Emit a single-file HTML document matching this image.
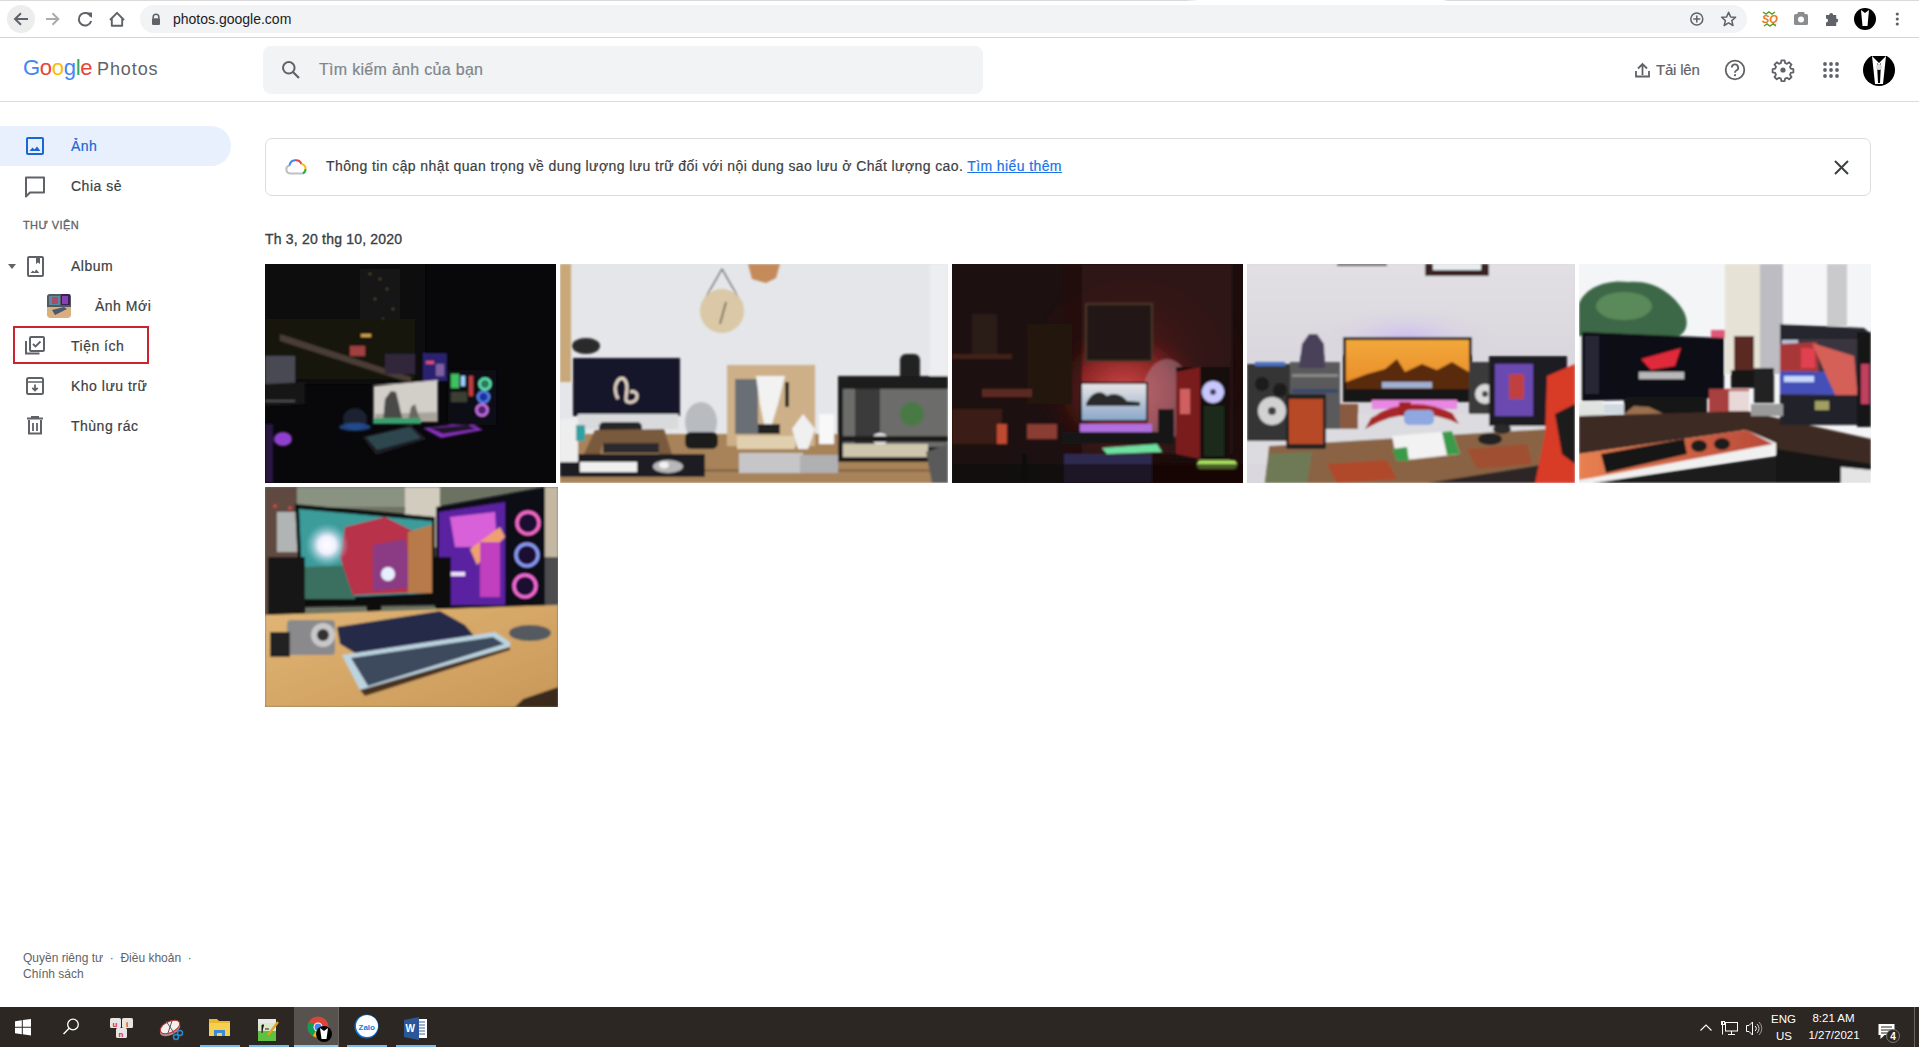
<!DOCTYPE html>
<html><head><meta charset="utf-8">
<style>
*{margin:0;padding:0;box-sizing:border-box}
html,body{width:1919px;height:1047px;overflow:hidden;background:#fff;font-family:"Liberation Sans",sans-serif;color:#3c4043}
.a{position:absolute}
.t{position:absolute;white-space:nowrap;line-height:1}
.m{-webkit-text-stroke:0.2px currentColor}
svg{display:block}
</style></head><body>
<!-- chrome toolbar -->
<div class="a" style="left:0;top:0;width:1198px;height:1px;background:linear-gradient(90deg,#dadada 99%,#fff)"></div>
<div class="a" style="left:1443px;top:0;width:476px;height:1px;background:linear-gradient(90deg,#fff,#dadada 1%)"></div>
<div class="a" style="left:0;top:37px;width:1919px;height:1px;background:#d3d4d6"></div>
<div class="a" style="left:7px;top:5px;width:28px;height:28px;border-radius:14px;background:#ededee"></div>
<svg class="a" style="left:0;top:0" width="140" height="37" viewBox="0 0 140 37">
 <path d="M28 19H15.5M21 13.2L15 19l6 5.8" fill="none" stroke="#5f6368" stroke-width="2"/>
 <path d="M46 19h12.5M52.5 13.2L58.3 19l-5.8 5.8" fill="none" stroke="#a9abae" stroke-width="2"/>
 <path d="M90.8 16.5A6.3 6.3 0 1 0 91.2 21" fill="none" stroke="#5f6368" stroke-width="2"/>
 <path d="M86.5 12.5h5.5v5.5z" fill="#5f6368"/>
 <path d="M110 20l7-7.2 7 7.2M111.8 18.5v7.2h10.4v-7.2" fill="none" stroke="#5f6368" stroke-width="1.9" stroke-linejoin="round"/>
</svg>
<div class="a" style="left:140px;top:5px;width:1607px;height:28px;border-radius:14px;background:#f1f3f4"></div>
<svg class="a" style="left:150px;top:12px" width="12" height="14" viewBox="0 0 12 14">
 <path d="M3.2 6.5V5a2.8 2.8 0 0 1 5.6 0v1.5" fill="none" stroke="#5f6368" stroke-width="1.6"/>
 <rect x="2" y="6.3" width="8" height="6.6" rx="0.8" fill="#5f6368"/>
</svg>
<div class="t" style="left:173px;top:12px;font-size:14px;color:#202124">photos.google.com</div>
<svg class="a" style="left:1680px;top:0" width="239" height="37" viewBox="0 0 239 37">
 <circle cx="16.8" cy="19" r="6" fill="none" stroke="#5f6368" stroke-width="1.5"/>
 <path d="M16.8 15.5v7M13.3 19h7" stroke="#5f6368" stroke-width="1.5"/>
 <path d="M48.6 12.3l2 4.6 5 .4-3.8 3.3 1.2 4.9-4.4-2.6-4.4 2.6 1.2-4.9-3.8-3.3 5-.4z" fill="none" stroke="#5f6368" stroke-width="1.5" stroke-linejoin="round"/>
 <text x="82" y="23" font-family="Liberation Sans" font-weight="bold" font-style="italic" font-size="11" fill="#e8791c">SQ</text>
 <path d="M83 12l3 2 3-2 3 2 3-2M84 26l3-2 3 2 3-2 3 2" stroke="#5aa02c" stroke-width="1.5" fill="none"/>
 <rect x="114" y="14" width="14" height="11" rx="1.5" fill="#8a8c8e"/>
 <rect x="117.5" y="12" width="7" height="3" rx="1" fill="#8a8c8e"/>
 <circle cx="121" cy="19.5" r="3" fill="#fff"/>
 <path d="M146 15h3.2a2 2 0 1 1 4 0h3v3.5a2 2 0 1 1 0 4V26h-10.2v-3.5a2 2 0 1 0 0-4z" fill="#5f6368"/>
 <circle cx="185" cy="19" r="11" fill="#000"/>
 <path d="M181 10l4 3 4-3 -1.5 16h-5z" fill="#fff"/>
 <circle cx="217.3" cy="14" r="1.6" fill="#5f6368"/>
 <circle cx="217.3" cy="19" r="1.6" fill="#5f6368"/>
 <circle cx="217.3" cy="24" r="1.6" fill="#5f6368"/>
</svg>

<!-- photos header -->
<div class="a" style="left:0;top:101px;width:1919px;height:1px;background:#dadce0"></div>
<div class="t" style="left:23px;top:57px;font-size:22px;letter-spacing:-0.3px"><span style="color:#4285f4">G</span><span style="color:#ea4335">o</span><span style="color:#fbbc05">o</span><span style="color:#4285f4">g</span><span style="color:#34a853">l</span><span style="color:#ea4335">e</span></div>
<div class="t" style="left:97px;top:60px;font-size:18px;letter-spacing:0.9px;color:#5f6368">Photos</div>
<div class="a" style="left:263px;top:46px;width:720px;height:48px;border-radius:8px;background:#f1f3f4"></div>
<svg class="a" style="left:279px;top:58px" width="24" height="24" viewBox="0 0 24 24">
 <circle cx="9.8" cy="9.8" r="5.8" fill="none" stroke="#5f6368" stroke-width="2"/>
 <path d="M14 14l6 6" stroke="#5f6368" stroke-width="2.2"/>
</svg>
<div class="t" style="left:319px;top:62px;font-size:16px;letter-spacing:0.3px;color:#80868b;-webkit-text-stroke:0.2px #80868b">Tìm kiếm ảnh của bạn</div>

<svg class="a" style="left:1630px;top:56px" width="289" height="30" viewBox="0 0 289 30">
 <path d="M6 15v5.5h13V15M12.5 19V8.5M8 12.5l4.5-4.5 4.5 4.5" fill="none" stroke="#5f6368" stroke-width="1.8"/>
 <circle cx="105" cy="14" r="9.3" fill="none" stroke="#5f6368" stroke-width="1.8"/>
 <path d="M101.8 11.6a3.2 3.2 0 1 1 4.5 2.9c-1 .5-1.3 1.1-1.3 2.2" fill="none" stroke="#5f6368" stroke-width="1.8"/>
 <circle cx="105" cy="19.2" r="1.1" fill="#5f6368"/>
 <g transform="translate(153 14)">
  <path d="M-1.6-9.6h3.2l.5 2.6 1.9.8 2.2-1.5 2.3 2.3-1.5 2.2.8 1.9 2.6.5v3.2l-2.6.5-.8 1.9 1.5 2.2-2.3 2.3-2.2-1.5-1.9.8-.5 2.6h-3.2l-.5-2.6-1.9-.8-2.2 1.5-2.3-2.3 1.5-2.2-.8-1.9-2.6-.5v-3.2l2.6-.5.8-1.9-1.5-2.2 2.3-2.3 2.2 1.5 1.9-.8z" fill="none" stroke="#5f6368" stroke-width="1.8" stroke-linejoin="round"/>
  <circle cx="0" cy="0" r="2.6" fill="#5f6368"/>
 </g>
 <g fill="#5f6368">
  <circle cx="195" cy="8" r="1.9"/><circle cx="201" cy="8" r="1.9"/><circle cx="207" cy="8" r="1.9"/>
  <circle cx="195" cy="14" r="1.9"/><circle cx="201" cy="14" r="1.9"/><circle cx="207" cy="14" r="1.9"/>
  <circle cx="195" cy="20" r="1.9"/><circle cx="201" cy="20" r="1.9"/><circle cx="207" cy="20" r="1.9"/>
 </g>
 <circle cx="249" cy="14" r="16" fill="#000"/>
 <path d="M242 0l7 7 7-7 -3 28h-8z" fill="#fff"/>
 <path d="M247 7l2 2 2-2 -1 20h-2z" fill="#000"/>
 <circle cx="249" cy="11" r="3" fill="#ddd"/>
</svg>
<div class="t m" style="left:1656px;top:62px;font-size:15px;color:#5f6368;letter-spacing:-0.2px">Tải lên</div>

<!-- sidebar -->
<div class="a" style="left:0;top:126px;width:231px;height:40px;border-radius:0 20px 20px 0;background:#e8f0fe"></div>
<svg class="a" style="left:0;top:126px" width="60" height="320" viewBox="0 0 60 320">
 <rect x="27" y="12" width="16" height="16" rx="1" fill="none" stroke="#1967d2" stroke-width="2"/>
 <path d="M29.5 25l3-3.5 2 2 2.5-3 3.5 4.5z" fill="#1967d2"/>
 <path d="M26 51.5h18v15H30l-4 4z" fill="none" stroke="#5f6368" stroke-width="2" stroke-linejoin="round"/>
 <path d="M8 138h8l-4 5z" fill="#5f6368"/>
 <rect x="28" y="131" width="15" height="19" rx="1" fill="none" stroke="#5f6368" stroke-width="2"/>
 <path d="M36 131h4v7l-2-1.5-2 1.5z" fill="#5f6368"/>
 <path d="M30.5 147l2.3-2.5 1.5 1.5 2-2.5 3 3.5z" fill="#5f6368"/>
 <path d="M26 215v12.5h13.5" fill="none" stroke="#5f6368" stroke-width="2"/>
 <rect x="30" y="211" width="14" height="14" rx="1" fill="none" stroke="#5f6368" stroke-width="2"/>
 <path d="M33 218l2.5 2.5 5-5" fill="none" stroke="#5f6368" stroke-width="1.8"/>
 <rect x="27" y="252" width="16" height="16" rx="1.5" fill="none" stroke="#5f6368" stroke-width="2"/>
 <path d="M27 256h16" stroke="#5f6368" stroke-width="1.5"/>
 <path d="M35 258.5v6M32.3 261.8l2.7 2.7 2.7-2.7" fill="none" stroke="#5f6368" stroke-width="1.8"/>
 <path d="M27 292.5h16M32 292.5v-1.5h6v1.5" fill="none" stroke="#5f6368" stroke-width="2"/>
 <path d="M29 294v13.5h12V294" fill="none" stroke="#5f6368" stroke-width="2"/>
 <path d="M33 297v8M37 297v8" stroke="#5f6368" stroke-width="1.8"/>
</svg>
<svg class="a" style="left:47px;top:294px;border-radius:3px" width="24" height="24" viewBox="0 0 24 24">
 <rect width="24" height="24" rx="3" fill="#d8b080"/>
 <rect x="0" y="0" width="24" height="13" fill="#505a60"/>
 <rect x="2" y="2" width="11" height="9" fill="#5a8aa0"/>
 <rect x="5" y="3" width="6" height="7" fill="#b04868"/>
 <rect x="14" y="0" width="9" height="11" fill="#3a2060"/>
 <rect x="15" y="2" width="6" height="8" fill="#8a40b0"/>
 <path d="M5 16 L17 13 L20 15 L8 21z" fill="#4a5870"/>
</svg>
<div class="t m" style="left:71px;top:139px;font-size:14px;letter-spacing:0.5px;color:#1967d2">Ảnh</div>
<div class="t m" style="left:71px;top:179px;font-size:14px;letter-spacing:0.5px;color:#3c4043">Chia sẻ</div>
<div class="t m" style="left:23px;top:220px;font-size:11px;color:#5f6368;letter-spacing:0.4px;-webkit-text-stroke:0.3px #5f6368">THƯ VIỆN</div>
<div class="t m" style="left:71px;top:259px;font-size:14px;letter-spacing:0.5px;color:#3c4043">Album</div>
<div class="t m" style="left:95px;top:299px;font-size:14px;letter-spacing:0.5px;color:#3c4043">Ảnh Mới</div>
<div class="t m" style="left:71px;top:339px;font-size:14px;letter-spacing:0.5px;color:#3c4043">Tiện ích</div>
<div class="t m" style="left:71px;top:379px;font-size:14px;letter-spacing:0.5px;color:#3c4043">Kho lưu trữ</div>
<div class="t m" style="left:71px;top:419px;font-size:14px;letter-spacing:0.5px;color:#3c4043">Thùng rác</div>
<div class="a" style="left:13px;top:326px;width:136px;height:38px;border:2.5px solid #c9242f"></div>

<div class="t" style="left:23px;top:952px;font-size:12px;color:#5f6368">Quyền riêng tư &nbsp;·&nbsp; Điều khoản &nbsp;·</div>
<div class="t" style="left:23px;top:968px;font-size:12px;color:#5f6368">Chính sách</div>

<!-- banner -->
<div class="a" style="left:265px;top:138px;width:1606px;height:58px;border:1px solid #dadce0;border-radius:7px"></div>
<svg class="a" style="left:284px;top:156px" width="24" height="20" viewBox="0 0 24 20">
 <path d="M6 17.5a4 4 0 0 1-.5-7.9" fill="none" stroke="#bdc1c6" stroke-width="2"/>
 <path d="M5.5 9.6A6.2 6.2 0 0 1 11 4.2" fill="none" stroke="#4285f4" stroke-width="2"/>
 <path d="M11 4.2a6.2 6.2 0 0 1 6.5 3.8" fill="none" stroke="#ea4335" stroke-width="2"/>
 <path d="M17.5 8a4.8 4.8 0 0 1 4 5" fill="none" stroke="#fbbc04" stroke-width="2"/>
 <path d="M21.5 13a4.5 4.5 0 0 1-3 4.5" fill="none" stroke="#34a853" stroke-width="2"/>
 <path d="M18.5 17.5H6" fill="none" stroke="#bdc1c6" stroke-width="2"/>
</svg>
<div class="t m" style="left:326px;top:159px;font-size:14px;letter-spacing:0.4px;color:#3c4043">Thông tin cập nhật quan trọng về dung lượng lưu trữ đối với nội dung sao lưu ở Chất lượng cao. <span style="color:#1a73e8;text-decoration:underline">Tìm hiểu thêm</span></div>
<svg class="a" style="left:1832px;top:158px" width="19" height="19" viewBox="0 0 19 19">
 <path d="M3 3l13 13M16 3L3 16" stroke="#3c4043" stroke-width="2"/>
</svg>
<div class="t" style="left:265px;top:232px;font-size:14px;color:#3c4043;-webkit-text-stroke:0.35px #3c4043;letter-spacing:0.2px">Th 3, 20 thg 10, 2020</div>

<!-- PHOTOS -->
<svg class="a" style="left:265px;top:264px" width="1606" height="443" viewBox="0 0 1606 443">
<defs>
 <filter id="b1" x="-5%" y="-5%" width="110%" height="110%"><feGaussianBlur stdDeviation="1.2"/></filter>
 <filter id="b2" x="-50%" y="-50%" width="200%" height="200%"><feGaussianBlur stdDeviation="6"/></filter>
 <radialGradient id="redglow2" cx="0.5" cy="0.5" r="0.5"><stop offset="0" stop-color="#5a2020"/><stop offset="1" stop-color="#2a1010" stop-opacity="0"/></radialGradient>
 <radialGradient id="redglow" cx="0.5" cy="0.5" r="0.5"><stop offset="0" stop-color="#d04848"/><stop offset="0.55" stop-color="#8a2424"/><stop offset="1" stop-color="#2a0c0c" stop-opacity="0"/></radialGradient>
 <linearGradient id="p3mon" x1="0" y1="0" x2="0" y2="1"><stop offset="0" stop-color="#e8e4e6"/><stop offset="1" stop-color="#8aa8c8"/></linearGradient>
 <linearGradient id="p4scr" x1="0" y1="0" x2="0" y2="1"><stop offset="0" stop-color="#f2a83a"/><stop offset="1" stop-color="#e88a28"/></linearGradient>
 <linearGradient id="p4top" x1="0" y1="0" x2="0" y2="1"><stop offset="0" stop-color="#e2e0e4"/><stop offset="1" stop-color="#dad7de"/></linearGradient>
 <radialGradient id="p4glow" cx="0.5" cy="0.5" r="0.5"><stop offset="0" stop-color="#cfc0f0"/><stop offset="1" stop-color="#dcd8de" stop-opacity="0"/></radialGradient>
 <linearGradient id="p5mat" x1="0" y1="0" x2="1" y2="0"><stop offset="0" stop-color="#e88050"/><stop offset="1" stop-color="#b84838"/></linearGradient>
 <radialGradient id="burst" cx="0.5" cy="0.5" r="0.5"><stop offset="0" stop-color="#ffffff"/><stop offset="0.4" stop-color="#f0f0ff"/><stop offset="1" stop-color="#80c0d0" stop-opacity="0"/></radialGradient>
 <linearGradient id="p6desk" x1="0" y1="0" x2="1" y2="1"><stop offset="0" stop-color="#e2b676"/><stop offset="1" stop-color="#c89858"/></linearGradient>
 <clipPath id="c1"><rect width="291" height="219"/></clipPath>
 <clipPath id="c2"><rect width="388" height="219"/></clipPath>
 <clipPath id="c3"><rect width="291" height="219"/></clipPath>
 <clipPath id="c4"><rect width="328" height="219"/></clipPath>
 <clipPath id="c5"><rect width="292" height="219"/></clipPath>
 <clipPath id="c6"><rect width="293" height="220"/></clipPath>
</defs>

<!-- Photo 1 -->
<g transform="translate(0 0)" clip-path="url(#c1)">
 <rect width="291" height="219" fill="#08080b"/>
 <g filter="url(#b1)">
 <rect x="0" y="0" width="160" height="120" fill="#0d0b0b"/>
 <rect x="95" y="5" width="40" height="70" fill="#141214"/>
 <g fill="#c8b070" opacity="0.8">
  <circle cx="105" cy="10" r="0.8"/><circle cx="115" cy="15" r="0.8"/><circle cx="122" cy="25" r="0.8"/><circle cx="110" cy="35" r="0.8"/><circle cx="128" cy="45" r="0.8"/><circle cx="118" cy="55" r="0.8"/><circle cx="103" cy="60" r="0.8"/><circle cx="125" cy="65" r="0.8"/>
 </g>
 <rect x="0" y="55" width="150" height="60" fill="#161210"/>
 <path d="M15 70 L146 113 L146 119 L15 77z" fill="#4a3c36"/>
 <rect x="0" y="92" width="30" height="30" fill="#4a4a52"/>
 <rect x="85" y="82" width="15" height="10" fill="#a04040"/>
 <rect x="96" y="70" width="10" height="3" fill="#d0a050"/>
 <rect x="120" y="90" width="30" height="20" fill="#30283a"/>
 <rect x="158" y="89" width="24" height="28" fill="#2a2470"/>
 <rect x="161" y="97" width="8" height="3" fill="#e05070"/>
 <rect x="171" y="100" width="8" height="12" fill="#8060a0"/>
 <path d="M108.5 122 L172.7 116 L172.7 158 L108.5 158z" fill="#d2cec8"/>
 <path d="M110 150 L172 148 L172 158 L110 158z" fill="#a8a49a"/>
 <path d="M118 158 L120 135 L126 127 L131 128 L134 140 L138 158z" fill="#4a4846"/>
 <path d="M143 158 L146 143 L150 140 L153 150 L156 158z" fill="#6a6660"/>
 <rect x="108" y="154" width="48" height="6" fill="#3aa070"/>
 <path d="M97 173 L146 161 L162 175 L111 191z" fill="#1c1c22"/>
 <path d="M101 173 L145 163 L156 174 L112 186z" fill="#2e4650"/>
 <path d="M158 164 L205 159 L218 166 L176 174z" fill="#8a30c0"/>
 <path d="M164 164 L203 161 L211 165 L178 170z" fill="#1e1626"/>
 <ellipse cx="90" cy="155" rx="12" ry="11" fill="#1a2030"/>
 <ellipse cx="90" cy="163" rx="16" ry="4" fill="#2a5ab0" opacity="0.7"/>
 <rect x="183" y="106" width="48" height="55" fill="#0e0e16"/>
 <rect x="186" y="110" width="8" height="14" fill="#40c060"/>
 <rect x="196" y="112" width="4" height="10" fill="#a0d0ff"/>
 <rect x="204" y="112" width="4" height="20" fill="#c04040"/>
 <rect x="186" y="128" width="16" height="10" fill="#3a4030"/>
 <circle cx="220" cy="120" r="5.5" fill="#2a7a60" stroke="#70ffc0" stroke-width="2"/>
 <circle cx="218.5" cy="133" r="5.5" fill="#1a30a0" stroke="#6090ff" stroke-width="2"/>
 <circle cx="217" cy="146" r="5.5" fill="#502070" stroke="#e080ff" stroke-width="2"/>
 <path d="M0 120 L40 118 L40 140 L0 142z" fill="#161618"/>
 <rect x="0" y="136" width="30" height="2" fill="#505050"/>
 <ellipse cx="18" cy="175" rx="9" ry="7" fill="#9040d0"/>
 <rect x="0" y="160" width="8" height="59" fill="#2a1640"/>
 </g>
</g>

<!-- Photo 2 -->
<g transform="translate(295 0)" clip-path="url(#c2)">
 <rect width="388" height="219" fill="#e4e6e9"/>
 <g filter="url(#b1)">
 <rect x="370" y="0" width="18" height="219" fill="#eceef0"/>
 <rect x="0" y="170" width="388" height="49" fill="#a8835a"/>
 <rect x="0" y="205" width="388" height="3" fill="#8a6a48"/>
 <rect x="0" y="0" width="11" height="118" fill="#c8a878"/>
 <path d="M188 0h32l-4 14 -10 5 -14 -4z" fill="#c48a5a"/>
 <path d="M142 40 L162 5 L182 40" fill="none" stroke="#333" stroke-width="1"/>
 <circle cx="162" cy="47" r="22" fill="#dac8a6"/>
 <path d="M160 60 L166 38" stroke="#333" stroke-width="1.2"/>
 <ellipse cx="26" cy="82" rx="14" ry="8" fill="#2a2a2a"/>
 <rect x="13" y="94" width="107" height="58" fill="#16142a"/>
 <path d="M58 135 C50 120 62 108 66 118 C70 128 60 140 72 138 C80 136 78 125 70 128" fill="none" stroke="#e8d8c8" stroke-width="3"/>
 <rect x="18" y="150" width="100" height="15" fill="#d8dadc"/>
 <rect x="60" y="158" width="12" height="8" fill="#c8c8c8"/>
 <rect x="39" y="158" width="43" height="16" rx="5" fill="#262628"/>
 <path d="M24 190 L35 166 L104 165 L112 190 L99 190 L95 179 L43 179 L40 190z" fill="#7a5a3c"/>
 <rect x="43" y="179" width="56" height="10" fill="#2a2a2e"/>
 <ellipse cx="141" cy="158" rx="16" ry="20" fill="#b8bcc0"/>
 <rect x="125" y="168" width="33" height="17" rx="6" fill="#1a1a1a"/>
 <rect x="0" y="190" width="145" height="23" fill="#1a1a22"/>
 <rect x="20" y="198" width="57" height="10" fill="#f0f0f0"/>
 <ellipse cx="108" cy="202.5" rx="15" ry="6.5" fill="#b8b8ba"/>
 <ellipse cx="104" cy="201" rx="5" ry="3.5" fill="#f2f2f2"/>
 <rect x="0" y="155" width="18" height="43" fill="#eeeeee"/>
 <rect x="16" y="161" width="9" height="16" fill="#30a0a0"/>
 <rect x="167" y="101" width="88" height="81" fill="#cdb088"/>
 <rect x="175" y="115" width="23" height="55" fill="#6a6e74"/>
 <path d="M196 112 L225 112 L218 140 L212 160 L204 160 L200 140z" fill="#f2f2f2"/>
 <rect x="198" y="160" width="22" height="10" fill="#222"/>
 <rect x="225" y="118" width="4" height="25" fill="#222"/>
 <rect x="177" y="172" width="58" height="13" fill="#e0d0b0"/>
 <path d="M232 165 L243 150 L255 165 L248 185 L238 185z" fill="#f0f0f0"/>
 <rect x="259" y="150" width="15" height="30" fill="#f8f8f8"/>
 <rect x="179" y="189" width="64" height="20" fill="#c6c6c8"/>
 <rect x="240" y="191" width="38" height="18" fill="#b0b0b2"/>
 <rect x="340" y="90" width="20" height="30" rx="6" fill="#222"/>
 <rect x="278" y="112" width="110" height="86" fill="#1c1c1c"/>
 <rect x="283" y="125" width="105" height="58" fill="#6c6c6a"/>
 <rect x="295" y="125" width="25" height="58" fill="#3a3a3a"/>
 <circle cx="352" cy="150" r="12" fill="#4a7a44"/>
 <ellipse cx="320" cy="175" rx="8" ry="6" fill="#e8e8e8"/>
 <rect x="283" y="180" width="85" height="13" fill="#cfc6ae"/>
 <rect x="283" y="172" width="105" height="6" fill="#1a1a1a"/>
 <path d="M366 188 L388 180 L388 219 L372 219z" fill="#5a5a5a"/>
 </g>
</g>

<!-- Photo 3 -->
<g transform="translate(687 0)" clip-path="url(#c3)">
 <rect width="291" height="219" fill="#1c0c0b"/>
 <g filter="url(#b1)">
 <rect x="110" y="0" width="170" height="190" fill="#2e1414"/>
 <ellipse cx="180" cy="100" rx="120" ry="110" fill="url(#redglow2)"/>
 <ellipse cx="172" cy="128" rx="85" ry="70" fill="url(#redglow)"/>
 <ellipse cx="215" cy="135" rx="25" ry="40" fill="#b08898" opacity="0.5"/>
 <rect x="134" y="40" width="66" height="57" fill="#241212" stroke="#4a3428" stroke-width="2"/>
 <rect x="0" y="0" width="130" height="219" fill="#1e0e0c" opacity="0.6"/>
 <rect x="0" y="90" width="60" height="5" fill="#402018"/>
 <rect x="20" y="50" width="25" height="40" fill="#2a1a16"/>
 <rect x="75" y="60" width="45" height="80" fill="#241210"/>
 <rect x="30" y="125" width="50" height="8" fill="#5a2a22"/>
 <rect x="0" y="145" width="50" height="35" fill="#3a1c16"/>
 <rect x="45" y="160" width="10" height="20" fill="#c04830"/>
 <rect x="75" y="160" width="30" height="15" fill="#8a3c30"/>
 <rect x="128" y="118" width="68" height="40" fill="#0e0e10"/>
 <rect x="130" y="120" width="64" height="36" fill="url(#p3mon)"/>
 <path d="M134 140 C140 126 150 126 155 132 C160 128 170 130 175 137 L188 138 L188 142 L134 142z" fill="#2a2a2a"/>
 <rect x="128" y="160" width="72" height="8" fill="#b070e0"/>
 <rect x="206" y="145" width="16" height="35" fill="#141414"/>
 <rect x="110" y="168" width="110" height="12" fill="#161216"/>
 <path d="M150 184 L205 180 L210 188 L155 190z" fill="#70e0a0"/>
 <rect x="112" y="190" width="88" height="29" fill="#2e2a50"/>
 <rect x="70" y="190" width="5" height="29" fill="#100808"/>
 <rect x="224" y="103" width="54" height="92" fill="#120a0a"/>
 <path d="M224 108 L248 103 L248 195 L224 190z" fill="#7a1e1e"/>
 <rect x="228" y="125" width="10" height="25" fill="#d06060"/>
 <circle cx="261" cy="128" r="11" fill="#c8c8ff"/>
 <circle cx="261" cy="128" r="3" fill="#404060"/>
 <rect x="252" y="142" width="20" height="50" fill="#1a2a1a"/>
 <rect x="245" y="196" width="40" height="9" rx="4" fill="#a8e060"/>
 <rect x="0" y="200" width="291" height="19" fill="#0e0808" opacity="0.6"/>
 </g>
</g>

<!-- Photo 4 -->
<g transform="translate(982 0)" clip-path="url(#c4)">
 <rect width="328" height="219" fill="#dad7de"/>
 <g filter="url(#b1)">
 <rect x="0" y="0" width="328" height="90" fill="url(#p4top)"/>
 <ellipse cx="160" cy="72" rx="95" ry="30" fill="url(#p4glow)"/>
 <rect x="178" y="0" width="64" height="12" fill="#3a2424"/>
 <rect x="186" y="0" width="48" height="6" fill="#e8eef0"/>
 <rect x="90" y="0" width="50" height="2" fill="#4a3030"/>
 <rect x="0" y="150" width="328" height="50" fill="#dcdce0"/>
 <rect x="0" y="100" width="44" height="77" fill="#363636"/>
 <circle cx="25" cy="147" r="14" fill="#d2d2d2"/>
 <circle cx="25" cy="147" r="4" fill="#404040"/>
 <circle cx="15" cy="120" r="7" fill="#1e1e1e"/>
 <circle cx="33" cy="126" r="7" fill="#1e1e1e"/>
 <rect x="43" y="98" width="50" height="67" fill="#5a5a5c"/>
 <rect x="45" y="110" width="46" height="3" fill="#888"/>
 <rect x="45" y="125" width="46" height="4" fill="#3a4a6a"/>
 <path d="M52 104 L55 80 L62 70 L70 70 L77 80 L78 104z" fill="#48405a"/>
 <rect x="8" y="98" width="30" height="4" fill="#4a70c0"/>
 <rect x="96" y="73" width="129" height="65" fill="#121212"/>
 <rect x="99" y="76" width="123" height="49" fill="url(#p4scr)"/>
 <path d="M99 118 L120 110 L138 105 L150 95 L158 108 L175 100 L190 106 L205 98 L222 108 L222 125 L99 125z" fill="#5a2a10"/>
 <rect x="135" y="118" width="50" height="6" fill="#a0b0d0"/>
 <rect x="125" y="136" width="85" height="9" fill="#e888e0"/>
 <path d="M118 165 Q165 138 212 160 L206 150 Q165 128 124 154z" fill="#a82828"/>
 <rect x="152" y="138" width="12" height="14" fill="#a02020"/>
 <rect x="222" y="98" width="28" height="52" fill="#3a3a3a"/>
 <circle cx="238" cy="130" r="10" fill="#dadada"/>
 <circle cx="238" cy="130" r="3" fill="#444"/>
 <rect x="242" y="92" width="78" height="70" fill="#1a1a24"/>
 <rect x="248" y="100" width="38" height="52" fill="#6a48b0"/>
 <rect x="262" y="110" width="15" height="25" fill="#c04040"/>
 <rect x="157" y="146" width="30" height="15" rx="5" fill="#90a8e0"/>
 <rect x="93" y="140" width="18" height="25" fill="#8a5a40"/>
 <path d="M18 219 L22 182 L301 165 L300 200 L280 219z" fill="#8a6444"/>
 <path d="M22 190 L65 188 L60 219 L18 219z" fill="#6e7a54"/>
 <path d="M80 200 L140 196 L150 215 L90 219z" fill="#b04a2a"/>
 <path d="M220 185 L280 180 L285 200 L230 205z" fill="#a05030"/>
 <rect x="39" y="130" width="40" height="55" rx="2" fill="#222"/>
 <rect x="42" y="135" width="34" height="45" fill="#b84a28"/>
 <path d="M145 172 L205 167 L213 190 L150 197z" fill="#f2f2f2"/>
 <path d="M145 185 L160 183 L162 197 L150 197z" fill="#3a9a48"/>
 <path d="M195 168 L205 167 L213 190 L200 191z" fill="#3a9a48"/>
 <ellipse cx="243" cy="175" rx="12" ry="6" fill="#222"/>
 <ellipse cx="255" cy="165" rx="9" ry="5" fill="#2a2a2a"/>
 <path d="M180 219 L300 200 L300 219z" fill="#2e2828"/>
 <path d="M300 112 L328 100 L328 219 L288 219 L298 170z" fill="#d83a28"/>
 <path d="M308 150 L328 140 L328 200 L315 190z" fill="#1a1a1a"/>
 </g>
</g>

<!-- Photo 5 -->
<g transform="translate(1314 0)" clip-path="url(#c5)">
 <rect width="292" height="219" fill="#f4f5f7"/>
 <g filter="url(#b1)">
 <path d="M0 40 C5 25 25 15 50 18 C75 16 95 30 105 48 C110 58 108 68 100 72 L0 72z" fill="#3e6846"/>
 <ellipse cx="45" cy="42" rx="28" ry="14" fill="#5a8a5a"/>
 <rect x="146" y="0" width="35" height="110" fill="#e6e2d6"/>
 <rect x="181" y="0" width="23" height="110" fill="#bcbcc2"/>
 <rect x="204" y="0" width="44" height="60" fill="#f6f6f8"/>
 <rect x="248" y="0" width="20" height="62" fill="#cacacc"/>
 <rect x="132" y="66" width="14" height="8" fill="#e05878"/>
 <path d="M3 68 L145 74 L145 134 L3 137z" fill="#0e0e12"/>
 <rect x="6" y="72" width="14" height="58" fill="#262636"/>
 <path d="M62 95 L102 84 L96 102 L72 106z" fill="#e02a3a"/>
 <rect x="60" y="108" width="45" height="7" fill="#b8b8b8"/>
 <rect x="155" y="72" width="20" height="36" fill="#5a2a22"/>
 <rect x="152" y="106" width="42" height="18" fill="#161616"/>
 <rect x="175" y="104" width="20" height="35" fill="#222"/>
 <rect x="130" y="125" width="40" height="25" fill="#a84040"/>
 <rect x="150" y="127" width="20" height="20" fill="#e8d8d8"/>
 <rect x="0" y="138" width="25" height="18" rx="4" fill="#e0e4e0"/>
 <rect x="25" y="140" width="20" height="10" fill="#d0d8e0"/>
 <rect x="45" y="133" width="83" height="18" rx="3" fill="#121214"/>
 <path d="M45 150 L55 142 L70 143 L85 150 L75 158 L50 158z" fill="#9a7050"/>
 <path d="M0 152 L167 147 L167 166 L0 190z" fill="#3e2a22"/>
 <path d="M10 194 L167 166 L197 179 L197 190 L12 219 L0 219 L0 190z" fill="#f0f0f0"/>
 <path d="M0 190 L167 166 L194 180 L12 214 L0 216z" fill="url(#p5mat)"/>
 <path d="M22 190 L105 175 L108 190 L27 209z" fill="#151515"/>
 <ellipse cx="120" cy="182" rx="8" ry="6" fill="#1e1e1e"/>
 <ellipse cx="143" cy="180" rx="8" ry="6" fill="#1e1e1e"/>
 <path d="M14 219 L197 192 L197 219z" fill="#1e1a1a"/>
 <path d="M167 147 L292 175 L292 219 L197 219 L197 179 L167 166z" fill="#3c2a24"/>
 <path d="M197 185 L292 200 L292 219 L197 219z" fill="#161414"/>
 <path d="M262 203 L292 206 L292 219 L262 219z" fill="#e4e4e4"/>
 <path d="M201 60 L285 64 L292 70 L292 80 L201 78z" fill="#26262e"/>
 <rect x="201" y="75" width="91" height="85" fill="#3a3440"/>
 <rect x="203" y="76" width="16" height="18" fill="#b8c4d8"/>
 <path d="M201 80 L238 78 L240 113 L201 113z" fill="#a83838"/>
 <rect x="222" y="84" width="14" height="20" fill="#e04050"/>
 <path d="M201 107 L263 108 L263 131 L201 130z" fill="#4450b8"/>
 <rect x="205" y="112" width="30" height="6" fill="#c8d8ff"/>
 <path d="M233 79 L275 92 L281 156 L268 156 L248 113z" fill="#d46058"/>
 <rect x="278" y="68" width="14" height="95" fill="#141218"/>
 <rect x="282" y="100" width="8" height="40" fill="#c04060"/>
 <rect x="201" y="131" width="77" height="30" fill="#24222a"/>
 <rect x="236" y="137" width="14" height="9" fill="#a0a060"/>
 <rect x="172" y="140" width="32" height="12" fill="#9a9a9a"/>
 </g>
</g>

<!-- Photo 6 -->
<g transform="translate(0 223)" clip-path="url(#c6)">
 <rect width="293" height="220" fill="#6c7262"/>
 <g filter="url(#b1)">
 <rect x="0" y="0" width="32" height="130" fill="#5e4840"/>
 <rect x="12" y="25" width="22" height="40" fill="#b0b4b4"/>
 <circle cx="10" cy="19" r="1.5" fill="#ff4040"/><circle cx="25" cy="21" r="1.5" fill="#ff4040"/>
 <rect x="32" y="0" width="108" height="20" fill="#8a9282"/>
 <rect x="140" y="0" width="35" height="60" fill="#d2ccbe"/>
 <rect x="280" y="0" width="13" height="70" fill="#c4b8a2"/>
 <rect x="275" y="70" width="18" height="55" fill="#4e4e50"/>
 <path d="M30 17 L170 30 L170 118 L35 120z" fill="#101010"/>
 <path d="M34 22 L167 34 L167 106 L38 112z" fill="#3a9c9a"/>
 <path d="M38 80 L90 78 L90 112 L38 112z" fill="#3a7060"/>
 <path d="M80 40 L120 30 L150 45 L160 105 L88 108 L75 70z" fill="#b83048"/>
 <path d="M108 58 L140 52 L150 100 L108 104z" fill="#8a3a84"/>
 <path d="M143 45 L167 38 L167 106 L143 106z" fill="#b87a48"/>
 <circle cx="62" cy="58" r="22" fill="url(#burst)"/>
 <circle cx="123" cy="87" r="7" fill="#e8f0ff"/>
 <rect x="102" y="112" width="14" height="18" fill="#111"/>
 <path d="M171 20 L280 0 L280 128 L171 124z" fill="#0c0a12"/>
 <path d="M174 25 L240 15 L240 118 L174 118z" fill="#5a24a0"/>
 <path d="M185 30 L230 25 L232 60 L190 60z" fill="#d860d8"/>
 <path d="M205 62 L235 40 L240 50 L212 78z" fill="#f0a070"/>
 <rect x="215" y="55" width="20" height="55" fill="#c040c0"/>
 <rect x="180" y="85" width="20" height="4" fill="#f0e0ff"/>
 <circle cx="263" cy="36" r="11" fill="#1a1030" stroke="#ff70d0" stroke-width="3"/>
 <circle cx="262" cy="68" r="11" fill="#1a1030" stroke="#90a0ff" stroke-width="3"/>
 <circle cx="260" cy="99" r="11" fill="#1a1030" stroke="#ff70e0" stroke-width="3"/>
 <rect x="3" y="70" width="37" height="80" fill="#121212"/>
 <rect x="170" y="70" width="16" height="50" fill="#111"/>
 <path d="M0 128 L293 118 L293 220 L0 220z" fill="url(#p6desk)"/>
 <path d="M72 140 L175 124 L200 138 L210 150 L100 172 L75 157z" fill="#262c48"/>
 <path d="M77 168 L230 145 L245 155 L245 160 L100 207 L95 203z" fill="#bcd4e0"/>
 <path d="M86 171 L228 150 L239 157 L103 199z" fill="#3e4a5c"/>
 <path d="M95 203 L245 160 L245 163 L100 209z" fill="#4a3020"/>
 <rect x="22" y="133" width="48" height="35" rx="4" fill="#8a8a8c"/>
 <rect x="5" y="145" width="20" height="25" fill="#222"/>
 <circle cx="58" cy="148" r="12" fill="#c8c8c8"/>
 <circle cx="58" cy="148" r="6" fill="#333"/>
 <ellipse cx="265" cy="146" rx="21" ry="8" fill="#555a60"/>
 <path d="M258 212 L293 200 L293 220 L250 220z" fill="#3a2a1a"/>
 </g>
</g>
</svg>


<!-- taskbar -->
<svg class="a" style="left:0;top:1007px" width="1919" height="40" viewBox="0 0 1919 40">
 <rect width="1919" height="40" fill="#2c2723"/>
 <!-- windows logo -->
 <g fill="#fff">
  <path d="M15 14.2l6.8-1v6.5H15z"/><path d="M22.8 13.1l8.2-1.2v7.8h-8.2z"/>
  <path d="M15 20.7h6.8v6.5L15 26.2z"/><path d="M22.8 20.7H31v7.8l-8.2-1.2z"/>
 </g>
 <!-- search -->
 <circle cx="73" cy="17.5" r="5.3" fill="none" stroke="#fff" stroke-width="1.3"/>
 <path d="M69.2 21.3L63.5 27" stroke="#fff" stroke-width="1.4"/>
 <!-- unikey -->
 <rect x="110" y="11" width="11" height="10" rx="1.5" fill="#e8e4e4"/>
 <rect x="122" y="11" width="11" height="10" rx="1.5" fill="#e8e4e4"/>
 <rect x="116" y="21" width="11" height="10" rx="1.5" fill="#e8e4e4"/>
 <text x="112.5" y="19.5" font-family="Liberation Sans" font-size="8" font-weight="bold" fill="#d03030">u</text>
 <text x="126" y="19.5" font-family="Liberation Sans" font-size="8" font-weight="bold" fill="#d03030">i</text>
 <text x="118.5" y="29.5" font-family="Liberation Sans" font-size="8" font-weight="bold" fill="#d03030">n</text>
 <!-- snipping -->
 <ellipse cx="170" cy="22" rx="11" ry="6" transform="rotate(-25 170 22)" fill="#b88a90"/>
 <ellipse cx="170" cy="20" rx="10.5" ry="5.5" transform="rotate(-25 170 20)" fill="#f4f0f0" stroke="#c03030" stroke-width="1"/>
 <path d="M166 14l8 12M172 14l-4 12" stroke="#555" stroke-width="1"/>
 <circle cx="176" cy="30" r="2.5" fill="none" stroke="#2a8ad0" stroke-width="1.5"/>
 <circle cx="180" cy="26" r="2.5" fill="none" stroke="#2a8ad0" stroke-width="1.5"/>
 <!-- explorer -->
 <path d="M209 12h8l2 2h11v15h-21z" fill="#e8b830"/>
 <rect x="209" y="16" width="21" height="13" fill="#f8d050"/>
 <path d="M214 29v-6h11v6h-3v-3h-5v3z" fill="#3a8ad8"/>
 <rect x="200" y="38" width="40" height="2" fill="#76b9ed"/>
 <!-- notepad++ -->
 <rect x="258" y="12" width="18" height="22" fill="#d8e8c8"/>
 <rect x="258" y="24" width="18" height="10" fill="#60c040"/>
 <rect x="258" y="12" width="18" height="4" fill="#e8e8e8"/>
 <path d="M262 26v-8h2M265 22h4" stroke="#222" stroke-width="1"/>
 <path d="M268 28l10-13" stroke="#e8a020" stroke-width="2.2"/>
 <rect x="249" y="38" width="40" height="2" fill="#76b9ed"/>
 <!-- chrome active -->
 <rect x="294" y="0" width="44" height="40" fill="#57524d"/>
 <rect x="338" y="0" width="1" height="40" fill="#6a6560"/>
 <circle cx="318" cy="20" r="10.5" fill="#db4437"/>
 <path d="M318 20L308.9 14.75A10.5 10.5 0 0 0 312.75 29.1z" fill="#0f9d58"/>
 <path d="M318 20L312.75 29.1A10.5 10.5 0 0 0 328.5 20z" fill="#f4b400"/>
 <circle cx="318" cy="20" r="4.5" fill="#fff"/>
 <circle cx="318" cy="20" r="3.5" fill="#4285f4"/>
 <circle cx="324" cy="27" r="8" fill="#000"/>
 <path d="M320 21l4 3 4-3-1.5 11h-5z" fill="#fff"/>
 <rect x="294" y="38" width="44" height="2" fill="#8fc6f0"/>
 <!-- zalo -->
 <circle cx="366.5" cy="19.5" r="12" fill="#0b6cd8"/>
 <circle cx="367" cy="19" r="11" fill="#fff"/>
 <text x="358.5" y="22.5" font-family="Liberation Sans" font-size="8" font-weight="bold" fill="#1a7ad8">Zalo</text>
 <rect x="347" y="38" width="40" height="2" fill="#76b9ed"/>
 <!-- word -->
 <rect x="412" y="12" width="15" height="19" fill="#fff"/>
 <path d="M414 15h11M414 18h11M414 21h11M414 24h11M414 27h11" stroke="#2b579a" stroke-width="0.9"/>
 <path d="M404 13l15-3v23l-15-3z" fill="#2b579a"/>
 <text x="405.5" y="25" font-family="Liberation Sans" font-size="10" font-weight="bold" fill="#fff">W</text>
 <rect x="396" y="38" width="40" height="2" fill="#76b9ed"/>
 <!-- tray -->
 <path d="M1700.5 23.5l5.5-5.5 5.5 5.5" fill="none" stroke="#fff" stroke-width="1.1"/>
 <g fill="none" stroke="#fff" stroke-width="1">
  <rect x="1725.5" y="15.5" width="12" height="8.5"/>
  <path d="M1731.5 24v3M1728 27.5h7M1722.5 14.5v13"/>
  <rect x="1721.5" y="14.5" width="3" height="3"/>
 </g>
 <g fill="none" stroke="#fff" stroke-width="1">
  <path d="M1746.5 18.5h2.5l3.5-3.5v13l-3.5-3.5h-2.5z"/>
  <path d="M1755 19a3 3 0 0 1 0 5"/>
  <path d="M1757 17a6 6 0 0 1 0 9" stroke="#ccc"/>
  <path d="M1759 15a9 9 0 0 1 0 13" stroke="#999"/>
 </g>
 <text x="1783.5" y="16" text-anchor="middle" font-family="Liberation Sans" font-size="11.5" fill="#fff">ENG</text>
 <text x="1784" y="32.5" text-anchor="middle" font-family="Liberation Sans" font-size="11.5" fill="#fff">US</text>
 <text x="1833.5" y="15" text-anchor="middle" font-family="Liberation Sans" font-size="11.5" fill="#fff">8:21 AM</text>
 <text x="1834" y="32" text-anchor="middle" font-family="Liberation Sans" font-size="11.5" fill="#fff">1/27/2021</text>
 <path d="M1878.5 17h16v11h-10l-4 4v-4h-2z" fill="#fff"/>
 <path d="M1881 20h11M1881 23h11M1881 26h8" stroke="#2c2723" stroke-width="1"/>
 <circle cx="1893" cy="29" r="6.5" fill="#2c2723" stroke="#777" stroke-width="1"/>
 <text x="1893" y="33" text-anchor="middle" font-family="Liberation Sans" font-size="10" font-weight="bold" fill="#fff">4</text>
 <rect x="1914" y="0" width="1" height="40" fill="#6a6560"/>
</svg>

</body></html>
